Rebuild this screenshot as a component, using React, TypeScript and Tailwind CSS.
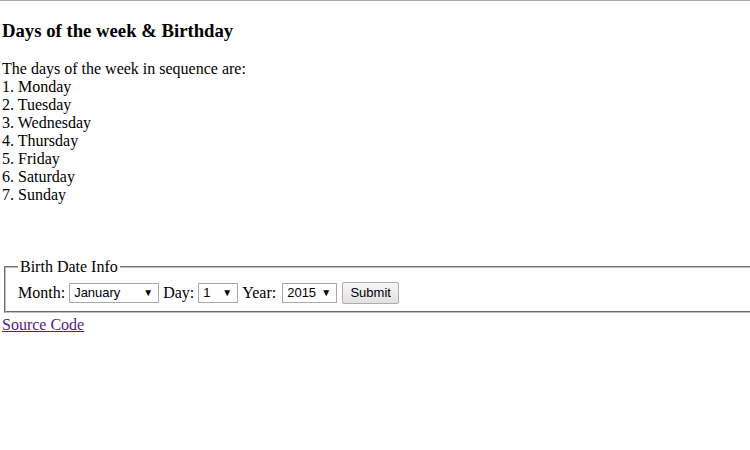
import React from "react";

function FakeSelect({ value, width }: { value: string; width: string }) {
  return (
    <span
      className={`inline-flex h-[20px] shrink-0 items-center justify-between border border-[#a9a9a9] bg-white pl-[4px] pr-[5px] text-[13px] leading-[18px] text-black ${width}`}
      style={{ fontFamily: "Arial, 'Liberation Sans', sans-serif" }}
    >
      <span>{value}</span>
      <span className="text-[10px] leading-none">▼</span>
    </span>
  );
}

export default function App() {
  const days = ["Monday", "Tuesday", "Wednesday", "Thursday", "Friday", "Saturday", "Sunday"];
  return (
    <div
      className="min-h-[450px] w-[750px] overflow-hidden border-t border-[#a9a9a9] bg-white pl-[2px] text-black"
      style={{ fontFamily: "'Liberation Serif', 'Times New Roman', serif" }}
    >
      <h3 className="mt-[19px] mb-[18px] text-[18.72px] font-bold leading-[22px]">
        Days of the week &amp; Birthday
      </h3>
      <div className="text-[16px] leading-[18px]">
        <div>The days of the week in sequence are:</div>
        {days.map((d, i) => (
          <div key={d}>
            {i + 1}. {d}
          </div>
        ))}
      </div>
      <fieldset className="mt-[54px] ml-[2px] w-[800px] border-2 border-[#c0c0c0] px-[12px] pt-[6px] pb-[7px] text-[16px] leading-[18px] [border-style:groove]">
        <legend className="px-[2px] leading-[18px]">Birth Date Info</legend>
        <div className="flex items-center">
          <span>Month:</span>
          <span className="ml-[4px]">
            <FakeSelect value="January" width="w-[90px]" />
          </span>
          <span className="ml-[4px]">Day:</span>
          <span className="ml-[4px]">
            <FakeSelect value="1" width="w-[40px]" />
          </span>
          <span className="ml-[4px]">Year:</span>
          <span className="ml-[6px]">
            <FakeSelect value="2015" width="w-[55px]" />
          </span>
          <span
            className="ml-[5px] inline-flex h-[22px] w-[57px] shrink-0 items-center justify-center rounded-[2px] border border-[#adadad] bg-gradient-to-b from-[#f6f6f6] to-[#e1e1e1] text-[13px] text-black"
            style={{ fontFamily: "Arial, 'Liberation Sans', sans-serif" }}
          >
            Submit
          </span>
        </div>
      </fieldset>
      <a href="#" className="text-[16px] leading-[18px] text-[#551a8b] underline">
        Source Code
      </a>
    </div>
  );
}
